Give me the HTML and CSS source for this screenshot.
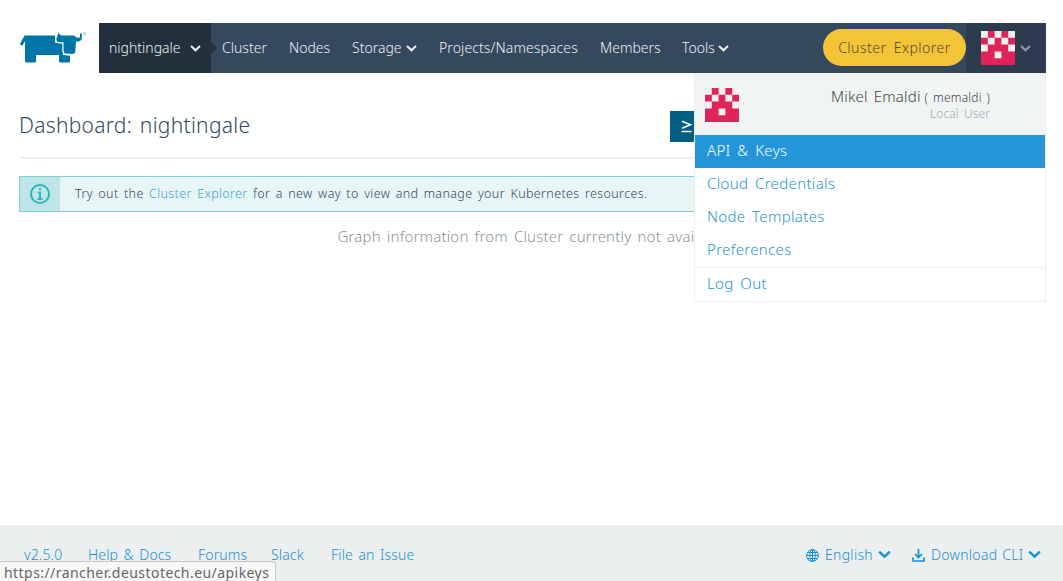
FILE: index.html
```html
<!DOCTYPE html>
<html lang="en">
<head>
<meta charset="utf-8">
<title>Dashboard: nightingale</title>
<link rel="stylesheet" href="styles.css">
</head>
<body>
<svg class="defs" width="0" height="0">
  <symbol id="chev" viewBox="0 0 11 7"><path d="M1 1l4.500 4.300L10 1" fill="none" stroke="currentColor" stroke-width="2"/></symbol>
  <symbol id="avatar" viewBox="0 0 5 5"><path fill="#f0f0f0" d="M0 0h5v5H0z"/><path fill="#e02457" d="M1 0h1v1H1zM3 0h1v1H3zM0 1h1v1H0zM2 1h1v1H2zM4 1h1v1H4zM1 2h3v1H1zM0 3h2v1H0zM3 3h2v1H3zM0 4h5v1H0z"/></symbol>
</svg>
<div class="page">
  <header class="header">
    <a class="logo"><svg width="68" height="32" viewBox="0 0 68 32">
      <path fill="#0075a8" d="M5.500 3.500H36V10.500H44V23L51 23.700V29.500Q51 30.500 50 30.500H41.500Q40 30.500 40 29V23H17V29Q17 30.500 15.500 30.500H7.500Q6 30.500 6 29V9L3.300 13.700L.8 12.200Z"/>
      <path fill="#0075a8" stroke="#fff" stroke-width="2.400" paint-order="stroke" d="M39.800 0Q40 3 43 3.500H54.500Q57 3.500 57 6V10L56.200 20Q55.800 22.300 53 22.100L47 21.500Q44.500 21 44.500 18.500V10.200H39.500Q36.800 9.500 37.500 6Z"/>
      <path fill="#0075a8" d="M57 5.500H61V1L62.800 2V7Q62 9.500 57 9.800Z"/>
      <circle cx="65.800" cy="1.800" r="1.200" fill="none" stroke="#5da7c6" stroke-width=".6"/>
    </svg></a>
    <nav class="nav">
      <a class="item scope"><span class="w-scope">nightingale</span><svg class="chev"><use href="#chev"/></svg></a>
      <a class="item cluster"><span class="w-cluster">Cluster</span></a>
      <a class="item"><span class="w-nodes">Nodes</span></a>
      <a class="item"><span class="w-storage">Storage</span><svg class="chev"><use href="#chev"/></svg></a>
      <a class="item"><span class="w-projects">Projects/Namespaces</span></a>
      <a class="item"><span class="w-members">Members</span></a>
      <a class="item"><span class="w-tools">Tools</span><svg class="chev"><use href="#chev"/></svg></a>
      <a class="explorer"><span>Cluster Explorer</span></a>
      <div class="user"><svg class="avatar"><use href="#avatar"/></svg><svg class="chev"><use href="#chev"/></svg></div>
    </nav>
    <div class="menu">
      <div class="profile">
        <svg class="avatar"><use href="#avatar"/></svg>
        <div class="who"><div class="name"><span class="full">Mikel Emaldi</span> <small>( memaldi )</small></div><div class="role">Local User</div></div>
      </div>
      <a class="entry active"><span>API &amp; Keys</span></a>
      <a class="entry"><span>Cloud Credentials</span></a>
      <a class="entry"><span>Node Templates</span></a>
      <a class="entry"><span>Preferences</span></a>
      <a class="entry logout"><span>Log Out</span></a>
    </div>
  </header>
  <main class="main">
    <div class="heading"><h1>Dashboard: nightingale</h1><button class="shell"><svg width="12" height="13" viewBox="0 0 12 13"><path d="M1 1.200L9.500 4.700L1 8.200M.5 11.500H10.500" fill="none" stroke="#fff" stroke-width="1.600"/></svg></button></div>
    <div class="banner">
      <div class="info"><svg width="20" height="20" viewBox="0 0 20 20"><circle cx="10" cy="10" r="9" fill="none" stroke="#31b4bc" stroke-width="2"/><path d="M10 4v2M7.800 8.500H10V15M7.500 15h5" fill="none" stroke="#31b4bc" stroke-width="2"/></svg></div>
      <p>Try out the <a>Cluster Explorer</a> for a new way to view and manage your Kubernetes resources.</p>
    </div>
    <p class="graph">Graph information from Cluster currently not available</p>
  </main>
  <footer class="footer">
    <div class="links">
      <a class="f-ver">v2.5.0</a><a class="f-help">Help &amp; Docs</a><a class="f-forums">Forums</a><a class="f-slack">Slack</a><a class="f-issue">File an Issue</a>
    </div>
    <div class="tools">
      <svg width="13" height="13" viewBox="0 0 13 13" fill="none" stroke="currentColor"><circle cx="6.500" cy="6.500" r="5.900"/><ellipse cx="6.500" cy="6.500" rx="2.800" ry="5.900"/><path d="M6.500 .5v12M.5 6.500h12M1.500 3.500h10M1.500 9.500h10"/></svg>
      <span class="t-lang">English</span><svg class="big"><use href="#chev"/></svg>
      <svg class="down" width="13" height="13" viewBox="0 0 13 13" fill="none" stroke="currentColor" stroke-width="1.700"><path d="M6.500 0v8.500M3 5l3.500 3.500L10 5M1 8.500v3.500h11V8.500"/></svg>
      <span class="t-cli">Download CLI</span><svg class="big"><use href="#chev"/></svg>
    </div>
  </footer>
</div>
<div class="status">https://rancher.deustotech.eu/apikeys</div>
</body>
</html>
```
FILE: styles.css
```css
* { box-sizing: border-box; }
body { margin: 0; background: #fff; font: 300 14px/20px "Noto Sans", sans-serif; color: #34495e; overflow: hidden; }
.defs { position: absolute; }
h1, p { margin: 0; }
.page { height: 581px; display: flex; flex-direction: column; }
.header { position: relative; display: flex; height: 73px; padding: 23px 17px 0 19px; }
.logo { width: 80px; padding: 9px 0 0 0; }
.nav { flex: 1; display: flex; background: #34495e; color: #ecf0f1; height: 50px; }
.item { display: flex; align-items: center; padding: 0 11px; white-space: nowrap; }
.item span, .explorer span, .entry span, .footer span { display: inline-block; white-space: nowrap; }
.item span { padding-bottom: 1px; }
.scope { width: 112px; padding: 0 9px 0 10px; background: #222f3d; position: relative; }
.scope::after { content: ""; position: absolute; right: -6px; top: 19px; border: 6px solid transparent; border-left-color: #222f3d; border-right: 0; }
.chev { width: 11px; height: 7px; margin-left: 4px; margin-top: 1px; }
.scope .chev { margin-left: 8px; }
.w-scope { width: 73px; }
.w-cluster { width: 45px; }
.w-nodes { width: 41px; }
.w-storage { width: 50px; }
.w-projects { width: 139px; letter-spacing: .1px; }
.w-members { width: 60px; }
.w-tools { width: 32px; }
.explorer { margin: 6px 0 0 auto; width: 143px; height: 37px; border-radius: 19px; background: #f3c436; color: #4d4a36; display: flex; align-items: center; justify-content: center; letter-spacing: .5px; word-spacing: 3px; }
.user { display: flex; align-items: center; width: 80px; background: #2c3b4d; padding-left: 15px; color: #8d9cab; }
.user .chev { margin-left: 5px; margin-top: 0; }
.avatar { width: 34px; height: 34px; }
.menu { position: absolute; top: 73px; left: 694px; width: 352px; height: 229px; background: #fff; border: 1px solid #ebeff0; border-top: 0; z-index: 2; }
.profile { height: 62px; display: flex; justify-content: space-between; background: #f0f4f5; padding: 15px 55px 0 10px; }
.who { text-align: right; margin-top: -2px; }
.name { font-size: 15px; color: #444; white-space: nowrap; }
.full { letter-spacing: .2px; word-spacing: 2px; }
.name small { font-size: 12px; letter-spacing: .2px; word-spacing: 1.500px; }
.role { font-size: 12px; line-height: 12px; color: #a5a7a9; word-spacing: 2px; letter-spacing: .1px; }
.entry { display: flex; align-items: center; height: 33px; padding: 0 12px 3px; font-size: 15px; color: #2595d9; letter-spacing: .33px; word-spacing: 2.500px; }
.active { background: #2595d9; color: #fff; }
.logout { border-top: 1px solid #ebeff0; height: 34px; }
.main { flex: 1; padding: 0 17px 0 19px; }
.heading { height: 86px; border-bottom: 2px solid #ecf0f1; display: flex; padding-top: 38px; }
h1 { width: 651px; font-size: 21px; line-height: 29px; font-weight: 300; letter-spacing: .28px; word-spacing: 2px; }
.shell { width: 46px; height: 31px; border: 0; background: #005f82; padding: 3px 0 0 11px; text-align: left; }
.banner { height: 36px; margin-top: 17px; border: 1px solid #83d0d2; background: #e7f5f7; display: flex; }
.info { width: 40px; background: #bee6e9; display: flex; align-items: center; justify-content: center; }
.banner p { padding: 7px 15px; font-size: 12.500px; white-space: nowrap; letter-spacing: .37px; word-spacing: 1.800px; }
.banner a { color: #3ba0dc; }
.graph { text-align: center; padding-top: 14px; font-size: 15px; color: #8c9399; white-space: nowrap; letter-spacing: .18px; word-spacing: 2px; }
.footer { height: 56px; background: #ebeff0; color: #1b8fd3; display: flex; justify-content: space-between; padding: 19px 22px 0 24px; }
.links, .tools { display: flex; padding-top: 1px; }
.links a { white-space: nowrap; letter-spacing: .15px; word-spacing: 1.700px; }
.tools svg { margin-top: 4px; }
.tools span { margin-left: 6px; letter-spacing: .3px; word-spacing: 1px; }
.tools .big { width: 13px; height: 9px; margin: 5px 0 0 5px; }
.tools .down { margin-left: 21px; }
.f-ver { width: 64px; } .f-help { width: 110px; } .f-forums { width: 73px; } .f-slack { width: 60px; }
.t-lang { width: 48px; } .t-cli { width: 92px; }
.status { position: absolute; left: 0; bottom: 0; height: 20px; width: 276px; padding: 1px 0 0 4px; border: 1px solid #c6c8c9; border-left: 0; border-bottom: 0; border-radius: 0 4px 0 0; background: #f7f7f7; color: #666; font: 400 14px/20px "Noto Sans", sans-serif; letter-spacing: .44px; white-space: nowrap; }
```
